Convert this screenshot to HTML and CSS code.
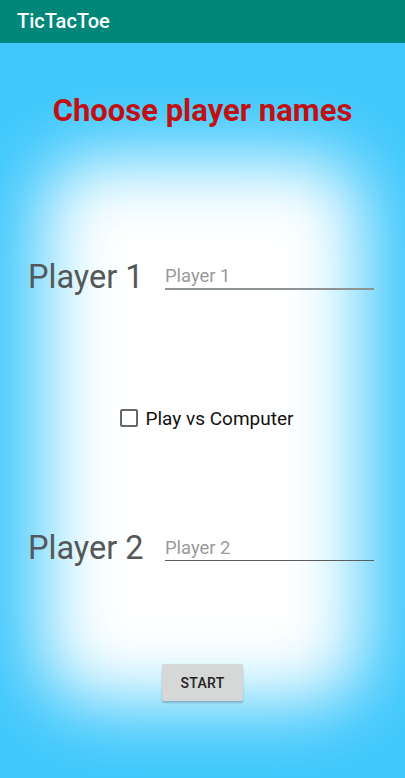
FILE: index.html
```html
<!DOCTYPE html>
<html>
<head>
<meta charset="utf-8">
<link rel="stylesheet" href="styles.css">
</head>
<body>
<header class="toolbar"><span class="app-title">TicTacToe</span></header>
<main class="screen">
  <div class="glow"></div>
  <h1 class="heading">Choose player names</h1>
  <div class="player-row row-one">
    <span class="player-label">Player 1</span>
    <input class="name-input first" type="text" placeholder="Player 1">
  </div>
  <label class="cpu-option">
    <span class="checkbox"></span>
    <span class="cpu-text">Play vs Computer</span>
  </label>
  <div class="player-row row-two">
    <span class="player-label">Player 2</span>
    <input class="name-input second" type="text" placeholder="Player 2">
  </div>
  <div class="actions"><button class="start-btn">START</button></div>
</main>
</body>
</html>
```
FILE: styles.css
```css
* { box-sizing: border-box; }
html, body { margin: 0; padding: 0; }
body {
  width: 405px;
  height: 778px;
  overflow: hidden;
  font-family: Roboto, "Noto Sans", sans-serif;
  background: #40c4ff;
}
.toolbar {
  height: 43px;
  background: #00877a;
  display: flex;
  align-items: center;
  padding-left: 17px;
  padding-bottom: 2px;
}
.app-title {
  color: #ffffff;
  font-size: 20px;
  font-weight: 500;
}
.screen {
  position: relative;
  height: 735px;
  background: #40c8fc;
  overflow: hidden;
  display: flex;
  flex-direction: column;
}
.glow {
  position: absolute;
  left: 42px;
  right: 42px;
  top: 115px;
  bottom: 75px;
  background: #ffffff;
  border-radius: 50px;
  filter: blur(36px);
}
.heading {
  position: relative;
  margin: 49px 0 0;
  text-align: center;
  color: #c20f12;
  font-size: 31px;
  line-height: 38px;
  font-weight: 700;
}
.player-row {
  position: relative;
  display: flex;
  align-items: center;
  padding: 0 31px 0 28px;
  height: 40px;
}
.row-one { margin-top: 127px; }
.row-two { margin-top: 95px; }
.player-label {
  color: #555858;
  font-size: 32.5px;
  line-height: 40px;
}
.name-input {
  margin-left: auto;
  width: 209px;
  height: 31px;
  border: 0;
  background: transparent;
  font-family: Roboto, sans-serif;
  font-size: 18.4px;
  padding: 4px 0 0 0;
  outline: none;
  margin-top: -5px;
}
.name-input::placeholder { color: #9a9a9a; }
.name-input.first { border-bottom: 2px solid #8e9393; }
.name-input.second { border-bottom: 1.5px solid #5c5c5c; }
.cpu-option {
  position: relative;
  margin-top: 106px;
  display: flex;
  align-items: center;
  justify-content: center;
  gap: 8px;
  padding-left: 8px;
  height: 30px;
}
.checkbox {
  width: 18px;
  height: 18px;
  border: 2px solid #686868;
  border-radius: 2px;
}
.cpu-text {
  color: #111;
  font-size: 19px;
}
.actions {
  position: relative;
  display: flex;
  justify-content: center;
  margin-top: 96px;
}
.start-btn {
  width: 81px;
  height: 37px;
  border: 0;
  border-radius: 2px;
  background: #d6d7d7;
  box-shadow: 0 2px 2px rgba(0,0,0,0.2), 0 0 1px rgba(0,0,0,0.15);
  font-family: Roboto, sans-serif;
  font-size: 14px;
  font-weight: 500;
  color: #222;
  letter-spacing: 0.3px;
  padding: 0;
}
```
